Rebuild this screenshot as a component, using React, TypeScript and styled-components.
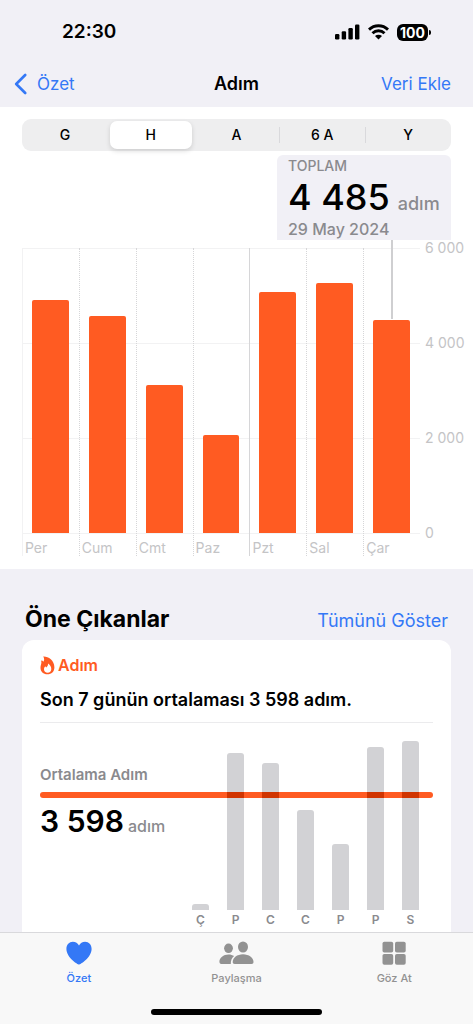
import React from "react";
import styled, { createGlobalStyle, css } from "styled-components";

const colors = {
  canvas: "#f1f0f6",
  blue: "#3478f6",
  orange: "#ff5b22",
  crossing: "#d03400",
  gray: "#8a8a8e",
  axis: "#c4c4c6",
  grid: "#f2f2f3",
  bar: "#d2d2d5",
};

const GlobalStyle = createGlobalStyle`
  * { box-sizing: border-box; }
  body {
    margin: 0;
    background: ${colors.canvas};
    color: #000;
    font-family: Inter, "Liberation Sans", sans-serif;
    -webkit-font-smoothing: antialiased;
  }
  h1, h2, h3, p, ul, ol { margin: 0; padding: 0; }
  ul, ol { list-style: none; }
  button { border: 0; padding: 0; background: none; font: inherit; color: inherit; cursor: pointer; }
  a { color: ${colors.blue}; text-decoration: none; }
`;

const Screen = styled.div`
  min-height: 100vh;
  display: flex;
  flex-direction: column;
`;

const StatusBar = styled.div`
  height: 60px;
  padding: 4px 42px 0 62px;
  display: flex;
  align-items: center;
  justify-content: space-between;
`;

const Clock = styled.time`
  font-size: 19px;
  line-height: 24px;
  font-weight: 600;
`;

const StatusIcons = styled.div`
  display: flex;
  align-items: center;
  gap: 8px;
`;

const Battery = styled.div`
  display: flex;
  align-items: center;
  gap: 1px;
`;

const BatteryBody = styled.span`
  width: 31px;
  height: 17px;
  border-radius: 6px;
  background: #000;
  color: #fff;
  font-size: 14px;
  line-height: 17px;
  font-weight: 700;
  text-align: center;
`;

const BatteryCap = styled.span`
  width: 2px;
  height: 5px;
  border-radius: 0 2px 2px 0;
  background: #000;
`;

const NavBar = styled.nav`
  height: 47px;
  padding: 0 22px 0 14px;
  display: grid;
  grid-template-columns: 1fr auto 1fr;
  align-items: center;
  font-size: 17px;
  line-height: 24px;
`;

const BackLink = styled.a`
  display: flex;
  align-items: center;
  gap: 10px;
`;

const NavTitle = styled.h1`
  font-size: 18px;
  line-height: 24px;
  font-weight: 600;
  padding-left: 8px;
`;

const NavAction = styled.button`
  justify-self: end;
  color: ${colors.blue};
`;

const ChartPanel = styled.section`
  background: #fff;
  padding: 12px 22px 13px;
`;

const Segments = styled.div`
  height: 32px;
  border-radius: 9px;
  background: #eeeeef;
  display: flex;
`;

const Segment = styled.button<{ $selected?: boolean; $divided?: boolean }>`
  flex: 1;
  position: relative;
  margin: 2px;
  border-radius: 7px;
  font-size: 14px;
  line-height: 28px;
  font-weight: 500;
  ${(p) =>
    p.$selected &&
    css`
      background: #fff;
      box-shadow: 0 2px 5px rgba(0, 0, 0, 0.14);
    `}
  ${(p) =>
    p.$divided &&
    css`
      &::before {
        content: "";
        position: absolute;
        left: -2px;
        top: 6px;
        bottom: 6px;
        width: 1px;
        background: #d9d9dc;
      }
    `}
`;

const Readout = styled.div`
  width: 174px;
  height: 85px;
  margin: 4px 0 0 auto;
  padding: 2px 11px 0;
  border-radius: 6px 6px 0 0;
  background: ${colors.canvas};
  color: ${colors.gray};
  font-weight: 500;
  white-space: nowrap;
`;

const ReadoutCaption = styled.p`
  font-size: 14px;
  line-height: 18px;
`;

const ReadoutDate = styled.p`
  font-size: 16px;
  line-height: 20px;
`;

const ReadoutTotal = styled.p`
  font-size: 18px;
  line-height: 20px;
  display: flex;
  align-items: baseline;
  gap: 8px;
`;

const Total = styled.strong`
  color: #000;
  font-size: 36px;
  line-height: 44px;
  font-weight: 500;
`;

const WeekChart = styled.div`
  display: flex;
  margin-right: -16px;
`;

const Plot = styled.div`
  flex: 1;
  position: relative;
  padding-top: 8px;
`;

const GridLines = styled.div`
  position: absolute;
  top: 8px;
  left: 0;
  right: 0;
  height: 286px;
  border-bottom: 1px solid ${colors.grid};
  background: repeating-linear-gradient(${colors.grid} 0 1px, transparent 1px 95px);
`;

const Days = styled.ol`
  position: relative;
  display: flex;
`;

const Day = styled.li<{ $line: "start" | "dotted" | "solid" }>`
  flex: 1;
  min-width: 0;
  border-left: 1px ${(p) => (p.$line === "dotted" ? "dotted" : "solid")}
    ${(p) => (p.$line === "start" ? colors.grid : "#d6d6d8")};
`;

const BarSlot = styled.div`
  position: relative;
  height: 285px;
  display: flex;
  align-items: flex-end;
  padding: 0 10px 0 9px;
`;

const Bar = styled.div`
  flex: 1;
  border-radius: 2px 2px 0 0;
  background: ${colors.orange};
`;

const Pointer = styled.span`
  position: absolute;
  top: -8px;
  left: calc(50% - 1px);
  width: 2px;
  height: 79px;
  background: #cfcfd1;
`;

const DayName = styled.p`
  padding: 3px 0 0 2px;
  height: 23px;
  color: ${colors.axis};
  font-size: 14px;
  line-height: 23px;
`;

const Axis = styled.div`
  width: 47px;
  height: 301px;
  padding-left: 5px;
  display: flex;
  flex-direction: column;
  justify-content: space-between;
  color: ${colors.axis};
  font-size: 14px;
  line-height: 16px;
  white-space: nowrap;
`;

const Highlights = styled.section`
  flex: 1;
  padding: 35px 22px 0;
  display: flex;
  flex-direction: column;
`;

const HighlightsHead = styled.div`
  height: 36px;
  padding: 0 3px;
  display: flex;
  align-items: baseline;
  justify-content: space-between;
  font-size: 18px;
  line-height: 30px;
`;

const HighlightsTitle = styled.h2`
  font-size: 23px;
  line-height: 30px;
  font-weight: 700;
`;

const Card = styled.article`
  flex: 1;
  padding: 14px 18px 0;
  border-radius: 12px 12px 0 0;
  background: #fff;
`;

const CardLabel = styled.h3`
  display: flex;
  align-items: center;
  gap: 3px;
  color: ${colors.orange};
  font-size: 16px;
  line-height: 22px;
  font-weight: 600;
`;

const CardSummary = styled.p`
  padding: 12px 0 10px;
  border-bottom: 1px solid #ebebed;
  font-size: 18px;
  line-height: 24px;
  font-weight: 600;
`;

const Average = styled.div`
  position: relative;
  padding: 18px 14px 0 0;
  display: flex;
  justify-content: space-between;
  align-items: flex-start;
`;

const AverageText = styled.div`
  padding-top: 24px;
  color: ${colors.gray};
  white-space: nowrap;
`;

const AverageCaption = styled.p`
  font-size: 15px;
  line-height: 20px;
  font-weight: 600;
`;

const AverageTotal = styled.p`
  margin-top: 16px;
  font-size: 16px;
  line-height: 40px;
  font-weight: 500;
  display: flex;
  align-items: baseline;
  gap: 4px;
`;

const AverageNumber = styled.strong`
  color: #000;
  font-size: 30px;
  font-weight: 600;
`;

const AverageLine = styled.div`
  position: absolute;
  top: 69px;
  left: 0;
  right: 0;
  height: 6px;
  border-radius: 3px;
  background: ${colors.orange};
`;

const MiniBars = styled.ol`
  position: relative;
  display: flex;
  gap: 18px;
`;

const MiniDay = styled.li`
  width: 17px;
  color: ${colors.gray};
  font-size: 12px;
  line-height: 20px;
  font-weight: 600;
  text-align: center;
`;

const MiniSlot = styled.div`
  height: 169px;
  display: flex;
  align-items: flex-end;
`;

/* The darker band shows only on bars tall enough to cross the average line. */
const MiniBar = styled.div`
  position: relative;
  flex: 1;
  overflow: hidden;
  border-radius: 3px 3px 0 0;
  background: ${colors.bar};

  &::after {
    content: "";
    position: absolute;
    left: 0;
    right: 0;
    bottom: 112px;
    height: 6px;
    background: ${colors.crossing};
  }
`;

const TabBar = styled.nav`
  height: 92px;
  border-top: 1px solid #d9d9dc;
  background: #f8f8f8;
  display: flex;
  flex-direction: column;
  align-items: center;
  justify-content: space-between;
  padding-bottom: 9px;
`;

const Tabs = styled.div`
  width: 100%;
  display: flex;
`;

const Tab = styled.a<{ $active?: boolean }>`
  flex: 1;
  padding-top: 8px;
  display: flex;
  flex-direction: column;
  align-items: center;
  gap: 5px;
  color: ${(p) => (p.$active ? colors.blue : "#929292")};
  font-size: 11px;
  line-height: 16px;
  font-weight: 500;
`;

const HomeIndicator = styled.div`
  width: 36%;
  height: 6px;
  border-radius: 3px;
  background: #000;
`;

const SignalIcon = () => (
  <svg width="25" height="16" viewBox="0 0 25 16" aria-hidden="true">
    <rect x="0" y="10" width="4.4" height="5.5" rx="1.2" />
    <rect x="6.7" y="7.3" width="4.4" height="8.2" rx="1.2" />
    <rect x="13.4" y="4" width="4.4" height="11.5" rx="1.2" />
    <rect x="20" y="0.5" width="4.4" height="15" rx="1.2" />
  </svg>
);

const WifiIcon = () => (
  <svg width="21" height="16" viewBox="0 0 21 16" aria-hidden="true">
    <g fill="none" stroke="#000" strokeWidth="2.9">
      <path d="M1 5.6a13.6 13.6 0 0 1 19 0" />
      <path d="M4.5 9.2a8.6 8.6 0 0 1 12 0" />
    </g>
    <path d="M10.5 15.6 7 12.1a5 5 0 0 1 7 0z" />
  </svg>
);

const ChevronIcon = () => (
  <svg width="13" height="22" viewBox="0 0 13 22" aria-hidden="true">
    <path d="M11.2 2 2.2 11l9 9" fill="none" stroke="currentColor" strokeWidth="2.6" strokeLinecap="round" strokeLinejoin="round" />
  </svg>
);

const FlameIcon = () => (
  <svg width="15" height="19" viewBox="0 0 15 19" aria-hidden="true">
    <path
      fill="currentColor"
      fillRule="evenodd"
      d="M3.2.6C7.8.2 14.4 4.2 14.4 11.2 14.4 15.6 11.5 18.3 7.4 18.3 3.3 18.3.5 15.7.5 12 .5 9.8 1.3 8.3 1.4 6.6 1.4 5.7 1.1 5 1.3 4.7 1.7 4.3 2.7 5 3.300 5.700 4.600 4.300 4.300 2.400 3.200.6ZM8 7.400c.3 2.400-1 3-1.700 4.100-.4-.3-.6-.8-1-1.300-1 1-1.300 2.100-1.300 3.100 0 2.100 1.500 3.500 3.600 3.500 2.200 0 3.700-1.500 3.700-3.700C11.300 10.400 9.800 8.300 8 7.400Z"
    />
  </svg>
);

const HeartIcon = () => (
  <svg width="26" height="24" viewBox="0 0 26 24" aria-hidden="true">
    <path fill="currentColor" d="M13 23.5C11.8 23.5.4 16.4.4 7.9.4 3.7 3.2.7 6.9.7c2.700 0 4.900 1.400 6.100 3.700C14.200 2.100 16.400.7 19.100.7c3.700 0 6.500 3 6.500 7.200 0 8.500-11.400 15.600-12.600 15.600Z" />
  </svg>
);

const PeopleIcon = () => (
  <svg width="35" height="24" viewBox="0 0 35 24" aria-hidden="true" fill="currentColor">
    <ellipse cx="9.5" cy="7.3" rx="4.4" ry="4.8" />
    <path d="M.4 20.8c0-3.900 4-7.300 9.100-7.300 2.200 0 4.100.6 5.600 1.600-2.200 1.800-3.400 4.300-3.300 7.900H2.300C1 23 .4 22 .4 20.800Z" />
    <ellipse cx="24" cy="6" rx="5" ry="5.5" />
    <path d="M13.700 21c0-4.200 4.400-7.800 10.300-7.800S34.500 16.800 34.500 21c0 1.300-.7 2-2 2H15.700c-1.300 0-2-.7-2-2Z" />
  </svg>
);

const GridIcon = () => (
  <svg width="24" height="24" viewBox="0 0 24 24" aria-hidden="true" fill="currentColor">
    <rect x="0.5" y="0.8" width="10.7" height="10.7" rx="1.8" />
    <rect x="13" y="0.8" width="10.7" height="10.7" rx="1.8" />
    <rect x="0.5" y="13" width="10.7" height="10.7" rx="1.8" />
    <rect x="13" y="13" width="10.7" height="10.7" rx="1.8" />
  </svg>
);

const AXIS_MAX = 6000;

const week = [
  { name: "Per", steps: 4905, line: "start" },
  { name: "Cum", steps: 4570, line: "dotted" },
  { name: "Cmt", steps: 3125, line: "dotted" },
  { name: "Paz", steps: 2065, line: "dotted" },
  { name: "Pzt", steps: 5075, line: "solid" },
  { name: "Sal", steps: 5265, line: "dotted" },
  { name: "Çar", steps: 4485, line: "dotted", selected: true },
] as const;

const MINI_MAX = 5265;

const lastSevenDays = [
  { name: "Ç", steps: 187 },
  { name: "P", steps: 4905 },
  { name: "C", steps: 4570 },
  { name: "C", steps: 3125 },
  { name: "P", steps: 2065 },
  { name: "P", steps: 5075 },
  { name: "S", steps: 5265 },
];

export default function App() {
  return (
    <>
      <GlobalStyle />
      <Screen>
        <header>
          <StatusBar>
            <Clock>22:30</Clock>
            <StatusIcons>
              <SignalIcon />
              <WifiIcon />
              <Battery>
                <BatteryBody>100</BatteryBody>
                <BatteryCap />
              </Battery>
            </StatusIcons>
          </StatusBar>
          <NavBar>
            <BackLink href="#ozet">
              <ChevronIcon />
              Özet
            </BackLink>
            <NavTitle>Adım</NavTitle>
            <NavAction type="button">Veri Ekle</NavAction>
          </NavBar>
        </header>

        <ChartPanel>
          <Segments>
            <Segment type="button">G</Segment>
            <Segment type="button" $selected aria-pressed="true">H</Segment>
            <Segment type="button">A</Segment>
            <Segment type="button" $divided>6 A</Segment>
            <Segment type="button" $divided>Y</Segment>
          </Segments>
          <Readout>
            <ReadoutCaption>TOPLAM</ReadoutCaption>
            <ReadoutTotal>
              <Total>4 485</Total>
              adım
            </ReadoutTotal>
            <ReadoutDate>29 May 2024</ReadoutDate>
          </Readout>
          <WeekChart>
            <Plot>
              <GridLines />
              <Days>
                {week.map((day) => (
                  <Day key={day.name} $line={day.line}>
                    <BarSlot>
                      <Bar style={{ height: `${(day.steps / AXIS_MAX) * 100}%` }} />
                      {"selected" in day && <Pointer />}
                    </BarSlot>
                    <DayName>{day.name}</DayName>
                  </Day>
                ))}
              </Days>
            </Plot>
            <Axis>
              <span>6 000</span>
              <span>4 000</span>
              <span>2 000</span>
              <span>0</span>
            </Axis>
          </WeekChart>
        </ChartPanel>

        <Highlights>
          <HighlightsHead>
            <HighlightsTitle>Öne Çıkanlar</HighlightsTitle>
            <a href="#tumu">Tümünü Göster</a>
          </HighlightsHead>
          <Card>
            <CardLabel>
              <FlameIcon />
              Adım
            </CardLabel>
            <CardSummary>Son 7 günün ortalaması 3 598 adım.</CardSummary>
            <Average>
              <AverageLine />
              <AverageText>
                <AverageCaption>Ortalama Adım</AverageCaption>
                <AverageTotal>
                  <AverageNumber>3 598</AverageNumber>
                  adım
                </AverageTotal>
              </AverageText>
              <MiniBars>
                {lastSevenDays.map((day, index) => (
                  <MiniDay key={index}>
                    <MiniSlot>
                      <MiniBar style={{ height: `${(day.steps / MINI_MAX) * 100}%` }} />
                    </MiniSlot>
                    {day.name}
                  </MiniDay>
                ))}
              </MiniBars>
            </Average>
          </Card>
        </Highlights>

        <TabBar>
          <Tabs>
            <Tab href="#ozet" $active>
              <HeartIcon />
              Özet
            </Tab>
            <Tab href="#paylasma">
              <PeopleIcon />
              Paylaşma
            </Tab>
            <Tab href="#goz-at">
              <GridIcon />
              Göz At
            </Tab>
          </Tabs>
          <HomeIndicator />
        </TabBar>
      </Screen>
    </>
  );
}
